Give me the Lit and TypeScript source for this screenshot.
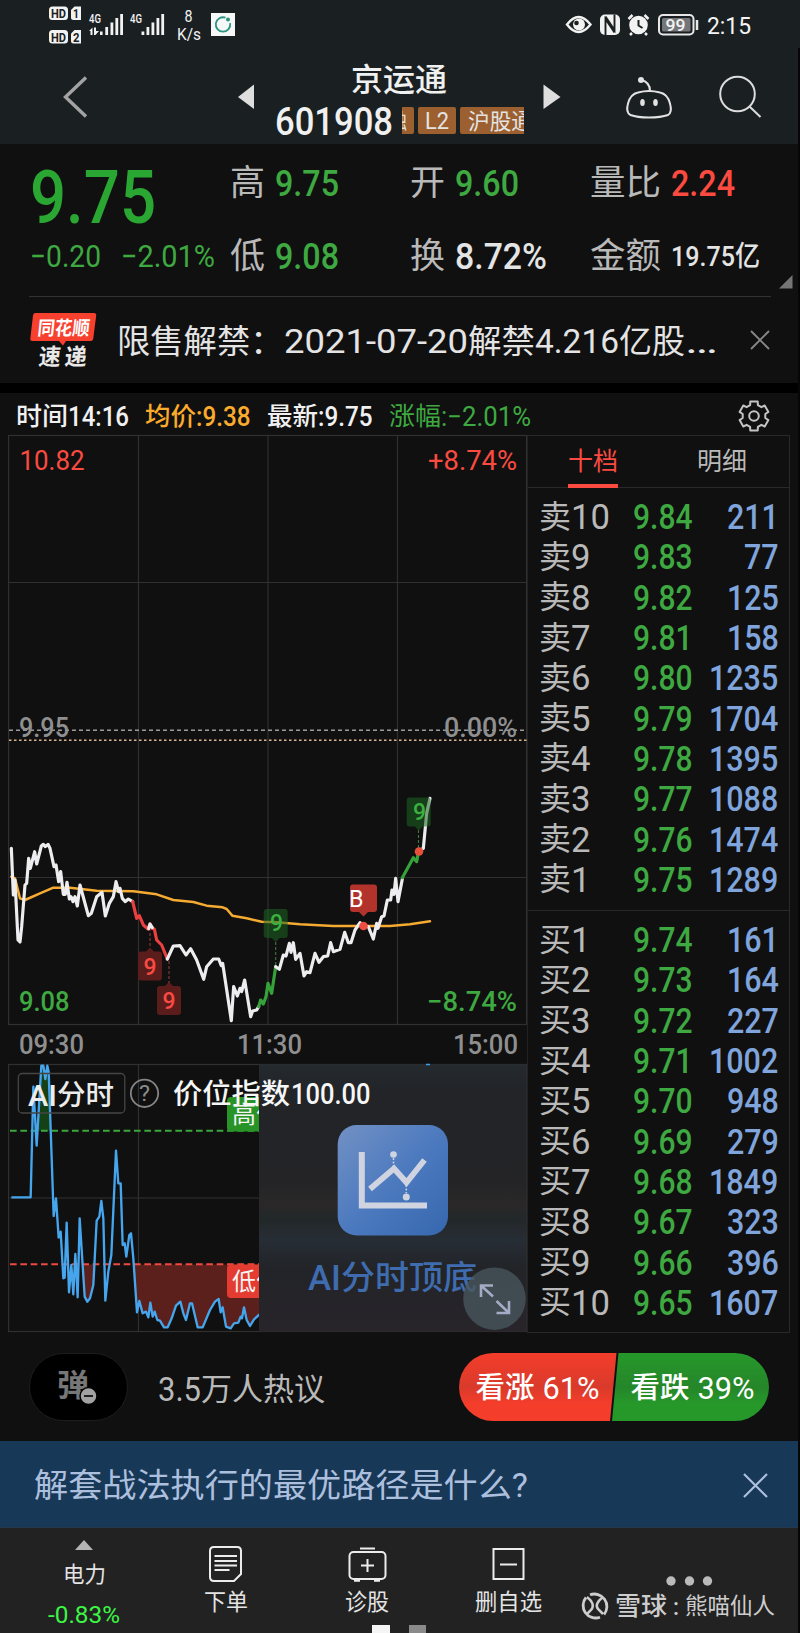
import { LitElement, html, svg, css } from "lit";
import { customElement } from "lit/decorators.js";

/* One run of text set to an exact advance width. */
const fit = (text: string, width: number, size: number, cls = "") => html`<svg
  class="fit ${cls}" width=${width} height=${size} viewBox="0 0 ${width} ${size}">
  <text x="0" y=${size * 0.88} font-size=${size} textLength=${width} lengthAdjust="spacingAndGlyphs">${text}</text></svg>`;

const label = (text: string, x: number, y: number, width: number, size: number, cls = "") => svg`<text
  class=${cls} x=${x} y=${y} font-size=${size} textLength=${width} lengthAdjust="spacingAndGlyphs">${text}</text>`;

const sells: [string, string, string][] = [
  ["卖10", "9.84", "211"], ["卖9", "9.83", "77"], ["卖8", "9.82", "125"], ["卖7", "9.81", "158"],
  ["卖6", "9.80", "1235"], ["卖5", "9.79", "1704"], ["卖4", "9.78", "1395"], ["卖3", "9.77", "1088"],
  ["卖2", "9.76", "1474"], ["卖1", "9.75", "1289"],
];
const buys: [string, string, string][] = [
  ["买1", "9.74", "161"], ["买2", "9.73", "164"], ["买3", "9.72", "227"], ["买4", "9.71", "1002"],
  ["买5", "9.70", "948"], ["买6", "9.69", "279"], ["买7", "9.68", "1849"], ["买8", "9.67", "323"],
  ["买9", "9.66", "396"], ["买10", "9.65", "1607"],
];

const AVG = "34,530 45,535 60,595 75,600 120,580 160,563 210,563 290,572 400,574 470,583 520,600 580,606 620,617 668,622 680,627 697,647 740,655 785,665 830,667 900,673 1000,678 1170,678 1230,673 1290,664";
const PRICE: [string, string][] = [
  ["w", "34,445 40,585 45,540 54,720 60,726 65,680 75,555 80,550 86,475 91,505 104,455 110,492 124,438 130,433 136,440 144,433 150,445 162,500 168,495 176,545 182,515 190,583 196,583 201,547 208,597 213,590 219,605 225,590 232,618 240,555 265,647 274,640 290,590 306,577 316,648 328,610 340,590 348,545 356,575 360,565 367,595 376,605 385,597 398,605"],
  ["r", "398,605 410,655 418,647 430,675 444,687 450,672 456,685 463,687 470,720 485,735 502,777"],
  ["w", "446,686 450,672 457,683"],
  ["w", "502,777 520,738 540,737 558,765 572,746 590,780 611,838 620,800 640,777 656,777 664,797 668,790 694,962 701,860 712,888 720,865 725,875 734,840 752,950 758,933 770,930 776,920"],
  ["g", "776,920 782,900 790,912 798,890 804,850 815,880 827,800"],
  ["w", "827,800 838,808 850,765 858,768 868,730 873,757 880,728 887,778 900,760 912,828 920,815 930,818 945,760 957,787 970,770 983,768 992,728 1000,755 1020,748 1034,697 1045,728 1053,728 1065,690 1080,668 1090,678 1105,680 1120,717 1130,670 1134,685 1145,650 1152,648 1162,600 1172,600 1176,570 1182,583 1187,535 1194,605 1207,537"],
  ["g", "1207,533 1240,473 1250,485 1256,453"],
  ["w", "1256,453 1270,445 1280,340 1290,295"],
];
const INDEX = "34,427 92,427 100,95 110,272 124,32 130,32 136,72 142,32 146,50 161,483 168,430 176,548 182,530 190,670 194,668 200,503 207,712 214,630 220,718 226,597 233,727 239,490 254,725 262,740 270,730 280,690 290,497 298,485 304,438 310,490 316,737 325,650 334,600 348,287 355,385 362,385 368,570 374,565 379,605 388,540 393,535 400,610 411,772 418,738 428,775 438,770 445,787 451,743 458,785 464,770 472,795 480,797 492,817 503,817 515,790 528,752 541,740 550,775 558,795 570,745 576,745 593,817 608,817 630,765 645,740 656,732 662,772 668,757 678,815 692,820 702,805 715,803 722,785 726,790 732,757 740,795 750,813 762,793 780,777";

const flag = (x: number, y: number, up: boolean, cls: string) => svg`<path class=${cls}
  d=${up
    ? `M${x - 9} ${y}h5l4 -4l4 4h5q3 0 3 3v23q0 3 -3 3h-18q-3 0 -3 -3v-23q0 -3 3 -3z`
    : `M${x - 9} ${y}h18q3 0 3 3v23q0 3 -3 3h-5l-4 4l-4 -4h-5q-3 0 -3 -3v-23q0 -3 3 -3z`}/>`;

@customElement("app-root")
export class AppRoot extends LitElement {
  static styles = css`
    :host { display: block; width: 800px; height: 1633px; overflow: hidden; background: #101010; position: relative;
      font-family: Roboto, "Noto Sans CJK SC", sans-serif; color: #e4e4e4; }
    * { box-sizing: border-box; }
    svg { display: block; flex: none; overflow: visible; }
    text { font-family: Roboto, "Noto Sans CJK SC", sans-serif; fill: currentColor; white-space: pre; }
    .m { font-weight: 500; } .b { font-weight: 700; }
    .green { color: #3ea941; } .vivid { color: #2aa632; } .red { color: #fb4b40; } .gray { color: #b9b9b9; } .white { color: #f0f0f0; }
    .dim { color: #8f8f8f; } .blue { color: #80a5dc; } .orange { color: #fbab2c; }
    .top { height: 144.5px; background: #1a2022; border-bottom: 1px solid #0c1010; }
    .status { height: 48px; }
    .nav { height: 96px; display: grid; grid-template-columns: 238px 37px 250px 101px 87px 87px; }
    .title { display: flex; flex-direction: column; padding-top: 15px; }
    .name { padding-left: 76px; height: 31px; display: flex; align-items: center; }
    .codes { display: flex; align-items: center; height: 53px; }
    .tags { display: flex; gap: 4px; margin-left: 9px; width: 122px; height: 27px; overflow: hidden; }
    .tag { background: #9c6030; border-radius: 2px; height: 27px; display: flex; align-items: center; justify-content: center; flex: none; overflow: hidden; }
    .t1 { width: 12px; justify-content: flex-end; padding-right: 7px; border-radius: 0 2px 2px 0; }
    .t2 { width: 38px; } .t3 { width: 76px; justify-content: flex-start; padding-left: 8px; }
    .quote { height: 151px; display: grid; grid-template-columns: 199.5px 180px 180px 1fr; padding-left: 30px; position: relative; }
    .last { display: flex; flex-direction: column; }
    .big { height: 100px; display: flex; align-items: center; }
    .chg { display: flex; gap: 20px; height: 21px; align-items: center; }
    .col { display: flex; flex-direction: column; }
    .kv { height: 73.5px; display: flex; align-items: center; gap: 10px; }
    .pair { height: 40px; display: flex; align-items: center; }
    .corner { position: absolute; right: 8px; bottom: 7px; }
    .news { margin: 0 29px; height: 87px; border-top: 1px solid #333; display: flex; align-items: center; padding-top: 1px; }
    .newsT { display: flex; align-items: center; margin-left: 20px; width: 634px; }
    .band { height: 10px; background: #000; }
    .info { height: 42px; display: flex; align-items: center; padding: 4px 0 0 16px; position: relative; }
    .info .run { display: flex; align-items: center; margin-right: 16px; }
    .info .run.green { margin-left: 1px; }
    .gear { margin-left: 191px; }
    .main { height: 897px; display: grid; grid-template-columns: 8px 520px 261.5px; }
    .book { border: 1px solid #292929; border-left-color: #222; margin-left: -1px; }
    .tabs { height: 52px; border-bottom: 1px solid #292929; display: flex; padding-top: 10px; }
    .tab { height: 42px; border-bottom: 4px solid transparent; padding-bottom: 8px; display: flex; align-items: center; margin-left: 40px; }
    .tab.on { border-color: #fb4b40; }
    .tab + .tab { margin-left: 79px; }
    .list { padding: 8px 10px 0 11px; height: 422px; }
    .list.buy { border-top: 1px solid #292929; }
    .row { height: 40.3px; display: grid; grid-template-columns: 94px 60px 1fr; align-items: center; }
    .row .vol { display: flex; justify-content: flex-end; }
    .talk { height: 109px; display: flex; align-items: center; padding: 2px 0 0 29px; }
    .pill { width: 98.5px; height: 68px; border-radius: 34px; background: #000; border: 1px solid #1d1d1d; display: flex; align-items: center; justify-content: center; }
    .hot { margin-left: 30px; width: 301.5px; display: flex; align-items: center; padding-top: 3px; }
    .ad { height: 87px; background: #183858; color: #acbfdd; border-bottom: 1px solid #26394b; display: flex; align-items: center; padding: 3px 0 0 34px; }
    .ad .x { margin-left: 214.5px; }
    .tabsbar { height: 105px; background: #222; display: grid; padding-left: 13.5px; grid-template-columns: repeat(4, 141.5px) 1fr; position: relative; }
    .item { display: flex; flex-direction: column; align-items: center; }
    .i1 { padding-top: 12px; } .i1 .fit { margin-top: 13px; } .i1 .fit + .fit { margin-top: 17px; }
    .i2 { padding-top: 18px; gap: 8px; }
    .lime { color: #3df545; }
    .more { padding-top: 48px; }
    .dots { margin-left: 85px; }
    .sign { display: flex; align-items: center; gap: 6px; margin-top: 6px; margin-left: 1.5px; color: #cdcdcd; }
    .dock { position: absolute; left: 372px; top: 97px; }
    .edge { position: absolute; right: 0; top: 48px; width: 2px; height: 1585px; background: #060606; }
    .grid line, .grid rect { stroke: #303030; stroke-width: 1.2; fill: none; }
    .ln { fill: none; stroke-width: 9.5; stroke-linejoin: round; stroke-linecap: round; }
    .w { stroke: #ededef; } .r { stroke: #ec4040; } .g { stroke: #35a23a; } .avg { stroke: #f5aa32; stroke-width: 7.5; }
    .fr { fill: #5a1d1b; } .fg { fill: #1b6420; opacity: .55; } .fb { fill: #b2332c; }
    .ai { color: #3f6cae; }
  `;

  private statusBar() {
    return html`<svg class="status" width="800" height="48" viewBox="0 0 800 48">
      <g fill="#f2f2f2">
        <rect x="49" y="6.5" width="19" height="13.5" rx="3.5"/><path d="M74.500 6.500H81V20H73.500q-2.500 0-2.500-2.500V10z"/>
        <rect x="49" y="30" width="19" height="13.5" rx="3.5"/><path d="M74.500 30H81V43.500H73.500q-2.500 0-2.500-2.500V33.500z"/>
        <path d="M100 31.5h2.6v3.5h-2.6zM105.300 27h2.800v8h-2.800zM110.500 22.500h2.800v12.500h-2.800zM115.400 18h2.800v17h-2.800zM120.200 14h2.800v21h-2.800z"/>
        <path d="M141.500 31.500h2.800v3.500h-2.800zM146.500 27h2.800v8h-2.800zM151.500 22.500h2.800v12.500h-2.800zM156.500 18h2.800v17h-2.800zM161.300 14h2.800v21h-2.800z"/>
        <path d="M89 31l3.500-3.500V35h-2v-4zM94 27.500h2V31h3l-3.500 4H94z"/>
      </g>
      <g color="#1a2022">${label("HD", 51, 18, 15, 13, "b")}${label("1", 73, 18, 6, 13, "b")}${label("HD", 51, 41.500, 15, 13, "b")}${label("2", 73, 41.500, 6.500, 13, "b")}</g>
      <g color="#f2f2f2">${label("4G", 89, 23, 12, 13, "m")}${label("4G", 130, 23, 12, 13, "m")}${label("8", 184.500, 21.500, 8, 16)}${label("K/s", 177, 40, 24, 17)}</g>
      <rect x="211" y="13" width="24" height="23" fill="#f5f8f7"/>
      <path d="M225.500 17.700a7.200 7.200 0 1 0 4.600 5.500" fill="none" stroke="#2b9480" stroke-width="1.800"/><circle cx="228" cy="19.500" r="2" fill="#2b9480"/>
      <path d="M567 24.500q11.500-15 23.500 0q-12 15-23.500 0z" fill="none" stroke="#f2f2f2" stroke-width="2.400"/>
      <circle cx="579" cy="24.500" r="6" fill="#f2f2f2"/><circle cx="576.500" cy="23" r="2.300" fill="#1a2022"/>
      <rect x="600" y="14.500" width="20" height="20.500" rx="5" fill="#f2f2f2"/>
      <path d="M605.500 35V19l9 13.500M614.500 14.500V30l-9-13.500" fill="none" stroke="#1a2022" stroke-width="1.900"/>
      <circle cx="638.500" cy="25" r="9.300" fill="#f2f2f2"/><path d="M638.500 20v5.500l4 2.500" fill="none" stroke="#1a2022" stroke-width="2"/>
      <path d="M628.500 19l4-4M648.500 19l-4-4M632 33l-2 2M645 33l2 2" stroke="#f2f2f2" stroke-width="2.500"/>
      <rect x="659" y="15" width="34.500" height="19.500" rx="4" fill="none" stroke="#e8e8e8" stroke-width="2"/><rect x="662" y="18" width="28.500" height="13.500" rx="1.500" fill="#74777a"/>
      <path d="M697 20v10" stroke="#e8e8e8" stroke-width="2.500"/>
      <g color="#f4f4f4">${label("99", 665.500, 31, 20, 17, "m")}${label("2:15", 707, 34, 44, 24)}</g>
    </svg>`;
  }

  private header() {
    return html`<div class="top">${this.statusBar()}
      <div class="nav">
        <svg width="238" height="96" viewBox="0 48 238 96"><path d="M86 77.500L65.500 97L86 116.500" fill="none" stroke="#a3a3a3" stroke-width="3.400"/></svg>
        <svg width="37" height="96" viewBox="238 48 37 96"><path d="M254 84.500v24.500L238 97z" fill="#dedede"/></svg>
        <div class="title">
          <div class="name">${fit("京运通", 96, 32, "white m")}</div>
          <div class="codes">${fit("601908", 118, 38, "white m")}
            <div class="tags"><span class="tag t1">${fit("融", 21, 21)}</span><span class="tag t2">${fit("L2", 24, 23)}</span><span class="tag t3">${fit("沪股通", 65, 22)}</span></div>
          </div>
        </div>
        <svg width="101" height="96" viewBox="525 48 101 96"><path d="M543.500 84.500v24.500L560.500 97z" fill="#dedede"/></svg>
        <svg width="87" height="96" viewBox="626 48 87 96"><g fill="none" stroke="#e2e2e2" stroke-width="2">
          <path d="M638 92.500q11-3 22 0q7.500 1.500 10 11q2.500 9-2 11.500q-7 2.500-19 2.500t-18.500-2.500q-5-2.500-2.500-11.500q2.500-9.500 10-11z"/><path d="M650 91q0-9-9-11"/></g>
          <circle cx="641" cy="80" r="3" fill="#e2e2e2"/><ellipse cx="642.500" cy="102.500" rx="2.300" ry="3.500" fill="#e2e2e2"/><ellipse cx="655.500" cy="102.500" rx="2.300" ry="3.500" fill="#e2e2e2"/></svg>
        <svg width="87" height="96" viewBox="713 48 87 96"><g fill="none" stroke="#dcdcdc" stroke-width="2"><circle cx="737.500" cy="94" r="17.300"/><path d="M749.500 106.500L760.500 117"/></g></svg>
      </div></div>`;
  }

  private quote() {
    const kv = (k: string, kw: number, v: unknown) => html`<div class="kv">${fit(k, kw, 35, "gray")}${v}</div>`;
    return html`<div class="quote">
      <div class="last"><div class="big">${fit("9.75", 126, 75, "vivid m")}</div>
        <div class="chg">${fit("−0.20", 71, 31, "green")}${fit("−2.01%", 94, 31, "green")}</div></div>
      <div class="col">${kv("高", 35, fit("9.75", 64, 37, "green m"))}${kv("低", 35, fit("9.08", 64, 37, "green m"))}</div>
      <div class="col">${kv("开", 35, fit("9.60", 64, 37, "green m"))}${kv("换", 35, fit("8.72%", 92, 37, "m"))}</div>
      <div class="col">${kv("量比", 71, fit("2.24", 64, 37, "red m"))}${kv("金额", 71, fit("19.75亿", 89, 28, "m"))}</div>
      <svg class="corner" width="13.500" height="13.500"><path d="M13.500 0v13.500H0z" fill="#757575"/></svg>
    </div>`;
  }

  private news() {
    return html`<div class="news">
      <svg width="68" height="56" viewBox="29 311 68 56">
        <path d="M35 312h59q2.500 0 2.200 2.500l-3 23.500q-.4 2-2.500 2H66l-3 4.500l-4-4.500H32.500q-2.500 0-2.200-2.500l2.700-23q.3-2.500 2-2.500z" fill="#f8402f"/>
        <g transform="translate(37 334) skewX(-6)" color="#fff">${label("同花顺", 0, 0, 52, 19.500, "b")}</g>
        <g transform="translate(38 364) skewX(-6)" color="#e8e8e8">${label("速", 0, 0, 22, 23, "b")}${label("递", 26, 0, 22, 23, "b")}</g>
      </svg>
      <div class="newsT">${fit("限售解禁：", 166.500, 32.500)}${fit("2021-07-20", 184, 34)}${fit("解禁", 67, 32.500)}${fit("4.216", 84, 34)}${fit("亿股", 66, 32.500)}${fit("…", 33, 34)}</div>
      <svg width="18" height="18"><path d="M0 0L18 18M18 0L0 18" stroke="#888" stroke-width="1.900"/></svg>
    </div>`;
  }

  private info() {
    const teeth = Array.from({ length: 6 }, (_, i) => {
      const p = (a: number, r: number) => `${(16 + r * Math.sin(a)).toFixed(1)} ${(16 - r * Math.cos(a)).toFixed(1)}`;
      const c = (i * Math.PI) / 3;
      return `${p(c - 0.35, 11.5)} L${p(c - 0.25, 15)} L${p(c + 0.25, 15)} L${p(c + 0.35, 11.5)}`;
    });
    return html`<div class="info">
      <span class="run white">${fit("时间", 52, 25.500, "m")}${fit("14:16", 61, 27, "m")}</span>
      <span class="run orange">${fit("均价", 51, 25.500, "m")}${fit(":9.38", 54.500, 27, "m")}</span>
      <span class="run white">${fit("最新", 51, 25.500, "m")}${fit(":9.75", 54.500, 27, "m")}</span>
      <span class="run green">${fit("涨幅", 52, 25.500)}${fit(":−2.01%", 90, 27)}</span>
      <svg class="gear" width="32" height="32"><g fill="none" stroke="#c4c4c4" stroke-width="2" stroke-linejoin="round"><path d="M${teeth.join(" L")}Z"/><circle cx="16" cy="16" r="4.800"/></g></svg>
    </div>`;
  }

  private charts() {
    return html`<svg width="520" height="897" viewBox="8 435 520 897">
      <defs>
        <linearGradient id="ico" x1="0" y1="0" x2="1" y2="1"><stop offset="0" stop-color="#7291c4"/><stop offset=".5" stop-color="#4d7abf"/><stop offset="1" stop-color="#3667ae"/></linearGradient>
        <linearGradient id="veil" x1="0" y1="0" x2="0" y2="1"><stop offset="0" stop-color="#242a2e"/><stop offset=".1" stop-color="#222428"/><stop offset=".45" stop-color="#242427"/><stop offset=".52" stop-color="#2a2828"/><stop offset=".58" stop-color="#222829"/><stop offset=".66" stop-color="#272d35"/><stop offset=".76" stop-color="#222428"/><stop offset="1" stop-color="#28242a"/></linearGradient>
        <clipPath id="low"><rect x="246" y="628" width="40" height="200"/><rect x="400" y="628" width="380" height="200"/></clipPath>
        <clipPath id="high"><rect x="114" y="0" width="40" height="227"/></clipPath>
        <clipPath id="left"><rect x="8" y="1060" width="251" height="275"/></clipPath>
      </defs>
      <g class="grid">
        <rect x="8.600" y="435.500" width="518" height="589"/><line x1="138.500" x2="138.500" y1="435" y2="1024"/><line x1="268" x2="268" y1="435" y2="1024"/><line x1="397.500" x2="397.500" y1="435" y2="1024"/>
        <line x1="9" x2="527" y1="582.500" y2="582.500"/><line x1="9" x2="527" y1="877.500" y2="877.500"/>
        <rect x="8.600" y="1064.500" width="518" height="267"/><line x1="138.500" x2="138.500" y1="1064" y2="1331"/><line x1="9" x2="260" y1="1198" y2="1198"/>
      </g>
      <line x1="9" x2="527" y1="730.200" y2="730.200" stroke="#9a9a9a" stroke-width="1.400" stroke-dasharray="4 3"/>
      <line x1="9" x2="527" y1="740.300" y2="740.300" stroke="#d9b48f" stroke-width="1.600" stroke-dasharray="2.500 2.500"/>
      <g class="red">${label("10.82", 19.500, 469.500, 65, 27)}${label("+8.74%", 428, 469.500, 89, 27)}</g>
      <g class="dim">${label("9.95", 19, 736.500, 50, 28, "m")}${label("0.00%", 444, 736.500, 73, 28, "m")}
        ${label("09:30", 19, 1054, 65, 28, "m")}${label("11:30", 237, 1054, 65, 28, "m")}${label("15:00", 453, 1054, 65, 28, "m")}</g>
      <g class="green">${label("9.08", 19, 1010.500, 50.500, 28, "m")}${label("−8.74%", 427, 1010.500, 90, 28, "m")}</g>
      ${flag(150, 951.500, true, "fr")}${flag(169, 986, true, "fr")}
      <g stroke-width="1.100" stroke-dasharray="3 2"><path d="M150 928v20M169 961v22" stroke="#8c3d39"/><path d="M275.700 942v24M418.500 830v20" stroke="#3b7a40"/></g>
      <g transform="translate(0 700) scale(.33333)">
        <polyline class="ln avg" points=${AVG}/>
        ${PRICE.map(([c, p]) => svg`<polyline class="ln ${c}" points=${p}/>`)}
      </g>
      ${flag(275.700, 909, false, "fg")}${flag(418.700, 797.500, false, "fg")}
      <path class="fb" d="M353 884.500h21q3 0 3 3v21.500q0 3-3 3h-6l-4.500 4.500l-4.500-4.500h-6q-3 0-3-3v-21.500q0-3 3-3z"/>
      <circle cx="363.500" cy="926" r="4.300" fill="#ee4d40"/><circle cx="419" cy="851.500" r="4.300" fill="#e9503c"/>
      <g color="#fb4a42">${label("9", 143.500, 974.500, 13, 23, "m")}${label("9", 162.500, 1008.500, 13, 23, "m")}</g>
      <g color="#3db042">${label("9", 270, 931, 13, 23, "m")}${label("9", 413, 820, 13, 23, "m")}</g>
      <g color="#fff">${label("B", 349, 907, 14.500, 24)}</g>

      <g clip-path="url(#left)">
        <g transform="translate(0 1055) scale(.33333)">
          <polygon clip-path="url(#low)" points="34,628 ${INDEX} 780,628" fill="#5c201c"/>
          <polygon clip-path="url(#high)" points="34,427 ${INDEX} 780,427" fill="#164016"/>
          <line x1="30" x2="780" y1="227" y2="227" stroke="#3ba63c" stroke-width="6" stroke-dasharray="20 11"/>
          <line x1="30" x2="780" y1="628" y2="628" stroke="#ec4a40" stroke-width="6" stroke-dasharray="20 11"/>
          <polyline points=${INDEX} fill="none" stroke="#45a6ee" stroke-width="7" stroke-linejoin="round"/>
        </g>
        <rect x="227" y="1097" width="60" height="34.500" rx="4" fill="#289427"/><rect x="227" y="1264.500" width="60" height="33.500" rx="4" fill="#e43c31"/>
        <g color="#f4f4f4">${label("高位", 232, 1123, 48, 24)}${label("低位", 232, 1290, 48, 24)}</g>
      </g>
      <rect x="18.300" y="1073.500" width="106.500" height="39.500" rx="4" fill="none" stroke="#454545" stroke-width="1.300"/>
      <g color="#ececec">${label("AI", 28, 1106, 29, 29, "m")}${label("分时", 57, 1105, 57, 28, "m")}</g>
      <circle cx="144.500" cy="1093.300" r="13.700" fill="none" stroke="#858585" stroke-width="1.800"/>
      <g color="#8c8c8c">${label("?", 139, 1101, 11, 22)}</g>
      <rect x="259" y="1064.500" width="267.500" height="267" fill="url(#veil)"/>
      <rect x="337.700" y="1125" width="110.300" height="110.500" rx="19" fill="url(#ico)"/>
      <g fill="none" stroke="#cfd4e0"><path d="M361.800 1152v53.500H427" stroke-width="6"/><path d="M370 1189l24-20.500l12.500 14L424.500 1160" stroke-width="5.800"/><path d="M393.500 1158v10M406.300 1185v8" stroke-width="1.500" stroke-dasharray="2 1.500"/></g>
      <circle cx="393.500" cy="1154.500" r="3.300" fill="#cfd4e0"/><circle cx="406.300" cy="1197" r="3.500" fill="#cfd4e0"/>
      <g class="ai">${label("AI", 308, 1290, 33, 35, "m")}${label("分时顶底", 341, 1289, 136, 33, "m")}</g>
      <circle cx="494.500" cy="1298.700" r="31.300" fill="#48565d" opacity=".78"/>
      <g fill="none" stroke="#a4abc4" stroke-width="2.600"><path d="M481 1297v-11.500h12M481 1285.500l12 11M509 1301v12h-12.500M509 1313l-12.500-12"/></g>
      <path d="M426 1064.500h4" stroke="#3fa0ea" stroke-width="1.500"/>
      <g color="#f6f6f6">${label("价位指数", 173, 1104, 117, 28, "m")}${label("100.00", 291, 1104, 79.500, 29, "m")}</g>
    </svg>`;
  }

  private row([k, p, v]: [string, string, string]) {
    const d = k.slice(1);
    return html`<div class="row"><span class="pair">${fit(k[0], 32, 32, "gray")}${fit(d, d.length * 19.5, 35, "gray")}</span>${fit(p, 59.500, 35, "green m")}<span class="vol">${fit(v, v.length * 17.3, 35, "blue m")}</span></div>`;
  }

  render() {
    return html`${this.header()}${this.quote()}${this.news()}
      <div class="band"></div>
      ${this.info()}
      <div class="main"><span></span>${this.charts()}
        <div class="book">
          <div class="tabs"><div class="tab on red">${fit("十档", 50, 25)}</div><div class="tab gray">${fit("明细", 50, 25)}</div></div>
          <div class="list">${sells.map((r) => this.row(r))}</div>
          <div class="list buy">${buys.map((r) => this.row(r))}</div>
        </div>
      </div>
      <div class="talk">
        <div class="pill"><svg width="40" height="38" viewBox="58 1368 40 38"><g color="#777">${label("弹", 57, 1396, 32, 31, "b")}</g><circle cx="88.500" cy="1396" r="8.500" fill="#a2a2a2" stroke="#000" stroke-width="1.500"/><path d="M84 1396h9" stroke="#111" stroke-width="1.800"/></svg></div>
        <div class="hot gray">${fit("3.5", 43, 33)}${fit("万人热议", 124, 31)}</div>
        <svg width="310" height="68" viewBox="459 1353 310 68">
          <defs><linearGradient id="up" x2="0" y2="1"><stop offset="0" stop-color="#f53d2b"/><stop offset=".5" stop-color="#d93a2b"/><stop offset=".75" stop-color="#f53d2b"/></linearGradient>
          <linearGradient id="dn" x2="0" y2="1"><stop offset="0" stop-color="#26982a"/><stop offset=".5" stop-color="#258629"/><stop offset=".75" stop-color="#26982a"/></linearGradient></defs>
          <path d="M493 1353H616.500L610 1421H493a34 34 0 0 1 0-68z" fill="url(#up)"/><path d="M618.500 1353H735a34 34 0 0 1 0 68H612z" fill="url(#dn)"/>
          <g color="#fff">${label("看涨", 475.500, 1398, 59, 29, "m")}${label("61%", 542.500, 1399, 57, 31)}${label("看跌", 630.500, 1398, 59, 29, "m")}${label("39%", 697.500, 1399, 57, 31)}</g>
        </svg>
      </div>
      <div class="ad">${fit("解套战法执行的最优路径是什么?", 494, 33.500)}<svg class="x" width="25" height="25"><path d="M1 1L24 24M24 1L1 24" stroke="currentColor" stroke-width="2.200"/></svg></div>
      <div class="tabsbar">
        <div class="item i1"><svg width="18" height="10"><path d="M9 0l9 10H0z" fill="#b5b5b5"/></svg>${fit("电力", 43, 22)}${fit("-0.83%", 72, 24, "lime")}</div>
        <div class="item i2"><svg width="33" height="36" fill="none" stroke="#ececec" stroke-width="2"><path d="M5 1h23q4 0 4 4v23l-7 7H5q-4 0-4-4V5q0-4 4-4z"/><path d="M5.500 10h22.500M5.500 15h22.500M5.500 19.500h22.500M5.500 24h15" stroke-width="1.800"/></svg>${fit("下单", 44, 22.500)}</div>
        <div class="item i2"><svg width="39" height="36" fill="none" stroke="#ececec" stroke-width="2"><rect x="1.500" y="6" width="36" height="27" rx="4"/><path d="M12 2.500h15M19.500 13v13M13 19.500h13"/><path d="M6 34.500h6M26 34.500h6" stroke-width="2.500"/></svg>${fit("诊股", 44, 22.500)}</div>
        <div class="item i2"><svg width="33" height="36" fill="none" stroke="#ececec" stroke-width="2"><rect x="1.500" y="3" width="30" height="30"/><path d="M8 18.500h17"/></svg>${fit("删自选", 67, 22.500)}</div>
        <div class="more">
          <svg class="dots" width="52" height="10" viewBox="665 1576 52 10" fill="#bababa"><circle cx="671" cy="1581" r="4.700"/><circle cx="689.500" cy="1581" r="4.700"/><circle cx="707.500" cy="1581" r="4.700"/></svg>
          <div class="sign"><svg width="28" height="28" fill="none" stroke="#cdcdcd" stroke-width="2.800"><path d="M9 2.800a12.500 12.500 0 0 1 14 19.700M19 25.200A12.500 12.500 0 0 1 5 5.500"/><path d="M6 5q9 7 4 13l-4 4M22 5q-9 7-5 12l5 5" stroke-width="2.500"/></svg>${fit("雪球", 52, 25, "m")}${fit(":", 6, 24, "m")}${fit("熊喵仙人", 90, 22.500)}</div>
        </div>
        <svg class="dock" width="55" height="8"><rect width="18" height="8" fill="#f5f5f5"/><rect x="37" width="17" height="8" fill="#8a8a8a"/></svg>
      </div>
      <div class="edge"></div>`;
  }
}
